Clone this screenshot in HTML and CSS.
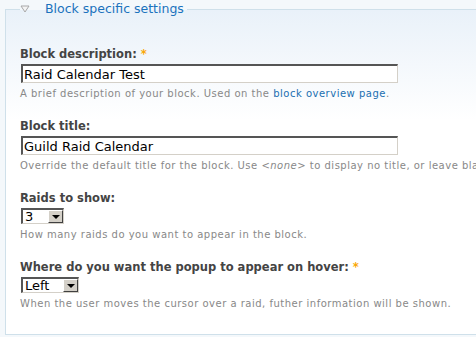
FILE: index.html
```html
<!DOCTYPE html>
<html lang="en">
<head>
  <meta charset="UTF-8" />
  <title>Block specific settings</title>
  <link rel="stylesheet" href="styles.css">
</head>
<body>
  <fieldset class="settings">
    <legend>
      <svg class="toggle" width="10" height="8" viewBox="0 0 10 8">
        <path d="M1 1 L9 1 L5 7 Z" fill="#f4f4f4" stroke="#a8a8a8" stroke-width="1" />
      </svg>
      <span class="legend-text">Block specific settings</span>
    </legend>

    <div class="form-item">
      <label>Block description: <span class="required">*</span></label>
      <input type="text" class="text-input" value="Raid Calendar Test" />
      <div class="description">A brief description of your block. Used on the <a href="#">block overview page</a>.</div>
    </div>

    <div class="form-item">
      <label>Block title:</label>
      <input type="text" class="text-input" value="Guild Raid Calendar" />
      <div class="description">Override the default title for the block. Use <em>&lt;none&gt;</em> to display no title, or leave blank to use the default block title.</div>
    </div>

    <div class="form-item">
      <label>Raids to show:</label>
      <div class="select small">
        <select><option>3</option></select>
        <span class="arrow"><i></i></span>
      </div>
      <div class="description">How many raids do you want to appear in the block.</div>
    </div>

    <div class="form-item">
      <label>Where do you want the popup to appear on hover: <span class="required">*</span></label>
      <div class="select wide">
        <select><option>Left</option></select>
        <span class="arrow"><i></i></span>
      </div>
      <div class="description">When the user moves the cursor over a raid, futher information will be shown.</div>
    </div>
  </fieldset>
</body>
</html>
```

FILE: styles.css
```css
body {
  margin: 0;
  background: #f4f8fb;
  font-family: "DejaVu Sans", Verdana, sans-serif;
  overflow: hidden;
  width: 476px;
  height: 337px;
}

.settings {
  margin: 2px 0 0 5px;
  padding: 30px 0 0 14px;
  width: 620px;
  height: 333px;
  box-sizing: border-box;
  border: 1px solid #cfe0ea;
  border-right: none;
  background: linear-gradient(#e9f1f9, #ffffff 110px);
}

legend {
  margin-left: 0;
  padding: 0 3px 0 0;
  display: flex;
  align-items: center;
  gap: 15px;
  color: #1a72bd;
  font-size: 12.5px;
  line-height: 14px;
}

.toggle {
  display: block;
}

.form-item {
  margin-bottom: 18px;
}

label {
  display: block;
  color: #444;
  font-weight: bold;
  font-size: 11.5px;
  line-height: 16px;
  margin-bottom: 2px;
}

.required {
  color: #f9a806;
}

.text-input {
  display: block;
  width: 377px;
  height: 19px;
  box-sizing: border-box;
  margin: 0 0 0 1px;
  padding: 0 1px;
  border: 1px solid #d4d0c8;
  border-top: 2px solid #555;
  border-left: 2px solid #555;
  font-family: inherit;
  font-size: 13px;
  color: #000;
  background: #fff;
}

.description {
  margin-top: 5px;
  color: #888;
  font-size: 10px;
  line-height: 12px;
  letter-spacing: 0.5px;
  white-space: nowrap;
}

.description a {
  color: #1a6fb1;
  text-decoration: none;
}

.select {
  display: flex;
  margin-left: 1px;
  height: 16px;
  box-sizing: border-box;
  border: 1px solid #d4d0c8;
  border-top: 2px solid #555;
  border-left: 2px solid #555;
  background: #fff;
}

.select select {
  appearance: none;
  -webkit-appearance: none;
  border: none;
  padding: 0 2px;
  margin: 0;
  font-family: inherit;
  font-size: 13px;
  line-height: 13px;
  height: 13px;
  background: #fff;
  color: #000;
  flex: 1;
  min-width: 0;
}

.select.small { width: 43px; }
.select.wide { width: 58px; }

.arrow {
  width: 15px;
  height: 13px;
  box-sizing: border-box;
  background: #d4d0c8;
  border: 1px solid;
  border-color: #fff #404040 #404040 #fff;
  display: flex;
  align-items: center;
  justify-content: center;
}

.arrow i {
  width: 0;
  height: 0;
  border-left: 4px solid transparent;
  border-right: 4px solid transparent;
  border-top: 4px solid #000;
}
```
